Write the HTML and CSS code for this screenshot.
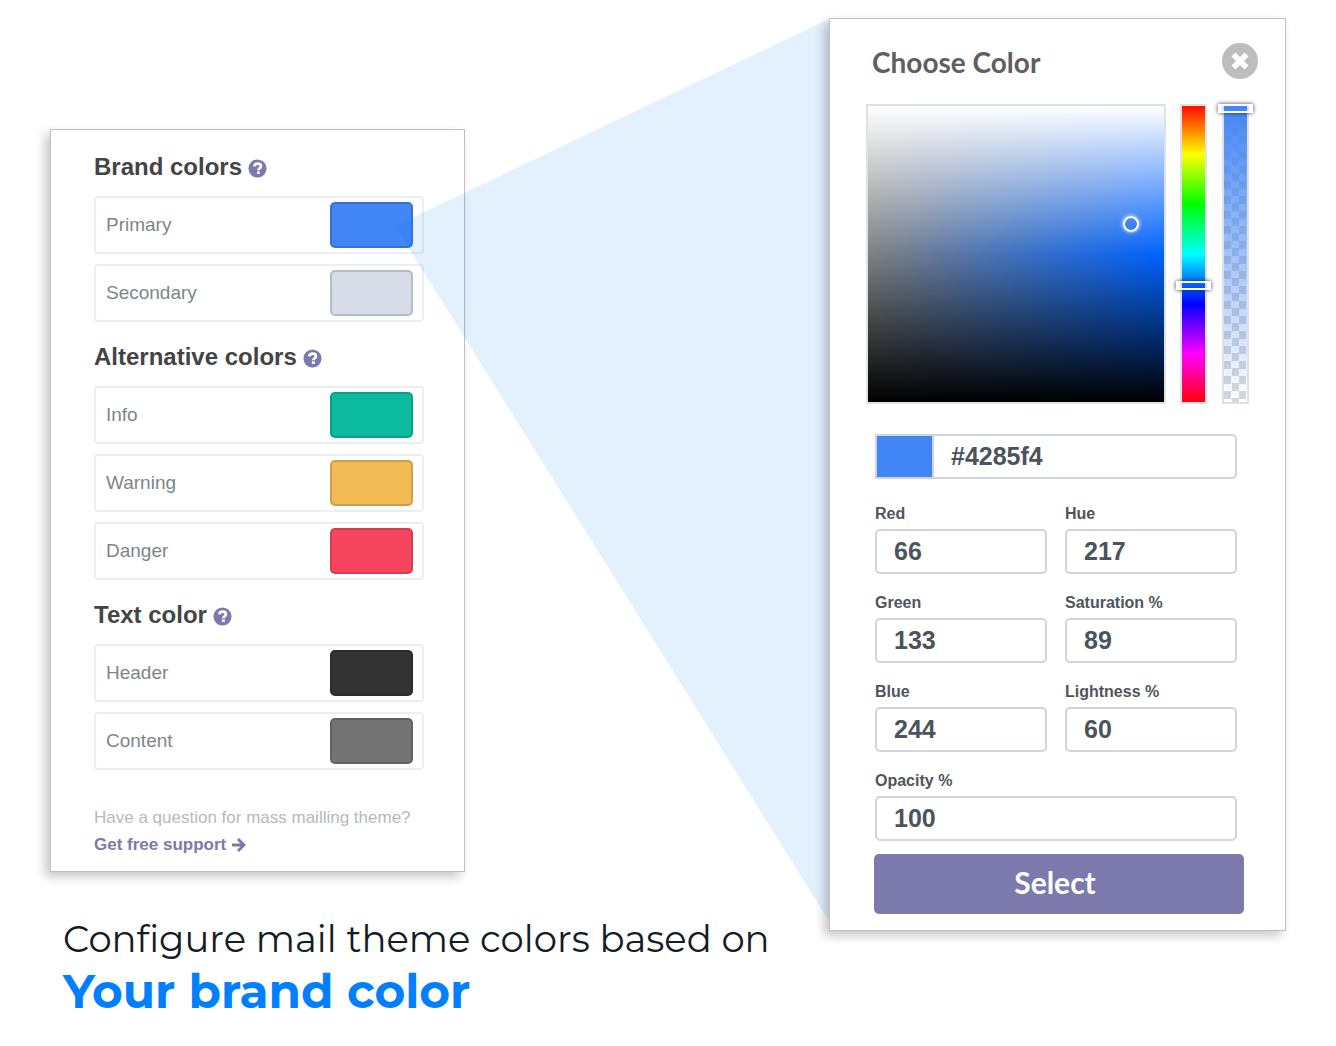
FILE: index.html
```html
<!DOCTYPE html>
<html lang="en">
<head>
  <meta charset="utf-8">
  <meta name="viewport" content="width=device-width, initial-scale=1">
  <title>Mail theme colors</title>
  <link rel="stylesheet" href="styles.css">
</head>
<body>
  <svg class="symbols" aria-hidden="true">
    <symbol id="help" viewBox="0 0 20 20">
      <circle cx="10" cy="10" r="9.5" fill="currentColor"/>
      <path d="M6.6 7.8C6.800 5.600 8.300 4.800 10.200 4.800c2 0 3.400 1.100 3.400 2.800 0 2.300-2.700 2.200-2.700 4.200" fill="none" stroke="#fff" stroke-width="2.800"/>
      <rect x="9.400" y="13" width="3" height="2.700" fill="#fff"/>
    </symbol>
  </svg>

  <main class="stage">
    <div class="intro">
      <section class="card theme">
        <section class="group">
          <h2 class="group-title">Brand colors
            <button class="help" type="button" aria-label="About brand colors"><svg><use href="#help"/></svg></button>
          </h2>
          <div class="row"><label for="primary">Primary</label><input class="swatch" id="primary" type="color" value="#4285f4"></div>
          <div class="row"><label for="secondary">Secondary</label><input class="swatch" id="secondary" type="color" value="#d6dce8"></div>
        </section>
        <section class="group">
          <h2 class="group-title">Alternative colors
            <button class="help" type="button" aria-label="About alternative colors"><svg><use href="#help"/></svg></button>
          </h2>
          <div class="row"><label for="info">Info</label><input class="swatch" id="info" type="color" value="#0cba9e"></div>
          <div class="row"><label for="warning">Warning</label><input class="swatch" id="warning" type="color" value="#f2ba55"></div>
          <div class="row"><label for="danger">Danger</label><input class="swatch" id="danger" type="color" value="#f6465f"></div>
        </section>
        <section class="group">
          <h2 class="group-title">Text color
            <button class="help" type="button" aria-label="About text color"><svg><use href="#help"/></svg></button>
          </h2>
          <div class="row"><label for="header">Header</label><input class="swatch" id="header" type="color" value="#333333"></div>
          <div class="row"><label for="content">Content</label><input class="swatch" id="content" type="color" value="#737373"></div>
        </section>
        <footer class="support">
          <p>Have a question for mass mailling theme?</p>
          <a href="#support">Get free support
            <svg class="arrow" viewBox="0 0 14 16" aria-hidden="true"><path d="M0 8h11M6 2l6 6-6 6" fill="none" stroke="currentColor" stroke-width="3"/></svg>
          </a>
        </footer>
      </section>

      <h1 class="headline">Configure mail theme colors based on <strong>Your brand color</strong></h1>
    </div>

    <svg class="beam" viewBox="0 0 434 902" preserveAspectRatio="none" aria-hidden="true">
      <path d="M0 207 434 0V902Z"/>
    </svg>

    <form class="card picker">
      <header class="picker-head">
        <h2>Choose Color</h2>
        <button class="close" type="button" aria-label="Close">
          <svg viewBox="0 0 36 36"><circle cx="18" cy="18" r="18" fill="#bdbdbd"/><path d="M11.500 11.500l13 13M24.500 11.500l-13 13" stroke="#fff" stroke-width="5.600"/></svg>
        </button>
      </header>

      <div class="spectrum">
        <div class="shade"><span class="point"></span></div>
        <div class="sliders">
          <input class="slider hue" type="range" min="0" max="360" value="219" aria-label="Hue slider">
          <input class="slider alpha" type="range" min="0" max="100" value="100" aria-label="Opacity slider">
        </div>
      </div>

      <div class="fields">
        <div class="hex">
          <span class="preview"></span>
          <input type="text" value="#4285f4" aria-label="Hex value">
        </div>
        <div class="field"><label for="red">Red</label><input id="red" type="text" value="66"></div>
        <div class="field"><label for="hue">Hue</label><input id="hue" type="text" value="217"></div>
        <div class="field"><label for="green">Green</label><input id="green" type="text" value="133"></div>
        <div class="field"><label for="saturation">Saturation %</label><input id="saturation" type="text" value="89"></div>
        <div class="field"><label for="blue">Blue</label><input id="blue" type="text" value="244"></div>
        <div class="field"><label for="lightness">Lightness %</label><input id="lightness" type="text" value="60"></div>
        <div class="field wide"><label for="opacity">Opacity %</label><input id="opacity" type="text" value="100"></div>
      </div>

      <button class="select" type="button">Select</button>
    </form>
  </main>
</body>
</html>
```

FILE: styles.css
```css
* {
  box-sizing: border-box;
}

body {
  margin: 0;
  background: #fff;
  font-family: "Liberation Sans", Arial, sans-serif;
}

h1, h2, p {
  margin: 0;
}

button {
  padding: 0;
  border: 0;
  background: none;
  cursor: pointer;
}

.symbols {
  display: none;
}

.stage {
  position: relative;
  display: grid;
  grid-template-columns: minmax(0, 1fr) 457px;
  align-items: start;
  padding: 18px 50px 24px;
}

.intro {
  padding-top: 111px;
}

.card {
  border: 1px solid #bfbfbf;
  background: #fff;
  box-shadow: -5px 5px 10px rgba(0, 0, 0, 0.22);
}

/* Theme colors */

.theme {
  display: flex;
  flex-direction: column;
  gap: 16px;
  max-width: 415px;
  padding: 18px 40px 13px 43px;
}

.group {
  display: flex;
  flex-direction: column;
  gap: 10px;
}

.group-title {
  display: flex;
  align-items: center;
  gap: 6px;
  height: 38px;
  color: #444;
  font-size: 24px;
  line-height: 36px;
}

.help {
  height: 19px;
  margin-top: 2px;
  color: #7c7aac;
}

.help svg {
  display: block;
  width: 19px;
  height: 19px;
}

.row {
  display: flex;
  align-items: center;
  justify-content: space-between;
  height: 58px;
  padding: 0 9px 0 10px;
  border: 2px solid #eceff2;
  border-radius: 4px;
  color: #7d858c;
  font-size: 19px;
}

.swatch {
  appearance: none;
  width: 83px;
  height: 46px;
  padding: 0;
  border: 0;
  background: none;
}

.swatch::-webkit-color-swatch-wrapper {
  padding: 0;
}

.swatch::-webkit-color-swatch {
  border: 2px solid rgba(0, 0, 0, 0.14);
  border-radius: 5px;
}

.support {
  padding-top: 18px;
  color: #b3bac1;
  font-size: 17px;
  line-height: 27px;
}

.support a {
  display: flex;
  align-items: center;
  gap: 6px;
  color: #7c7aac;
  font-weight: bold;
  text-decoration: none;
}

.arrow {
  width: 14px;
  height: 16px;
}

.headline {
  padding: 43px 0 0 13px;
  color: #141c26;
  font-family: Montserrat, Inter, sans-serif;
  font-size: 37px;
  font-weight: 400;
  font-variant-ligatures: none;
  line-height: 48px;
}

.headline strong {
  display: block;
  color: #0080ff;
  font-size: 47px;
  font-weight: 700;
  line-height: 58px;
}

/* Light cone that links the primary swatch with the picker */

.beam {
  position: absolute;
  top: 19px;
  left: 395px;
  width: calc(100% - 902px);
  height: 902px;
  fill: rgba(0, 123, 255, 0.11);
  pointer-events: none;
}

/* Color picker */

.picker {
  position: relative;
  padding: 24px 27px 16px 36px;
}

.picker-head {
  display: flex;
  align-items: center;
  justify-content: space-between;
  height: 36px;
  padding-left: 6px;
}

.picker-head h2 {
  padding-top: 2px;
  color: #605e5e;
  font-family: Lato, sans-serif;
  font-size: 28px;
  line-height: 36px;
}

.close svg {
  display: block;
  width: 36px;
  height: 36px;
}

.spectrum {
  display: flex;
  gap: 10px;
  margin-top: 25px;
  padding-right: 5px;
}

.shade {
  position: relative;
  flex: 1;
  aspect-ratio: 1;
  border: 2px solid #dde2e8;
  background:
    linear-gradient(to bottom, #fff, rgba(255, 255, 255, 0) 50%, rgba(0, 0, 0, 0) 50%, #000),
    linear-gradient(to right, #808080, #0062ff);
}

.point {
  position: absolute;
  top: 40%;
  left: 89%;
  width: 16px;
  height: 16px;
  margin: -8px;
  border: 2px solid #fff;
  border-radius: 50%;
  box-shadow: 0 0 4px #fff;
}

.sliders {
  display: flex;
  gap: 7px;
}

.slider {
  appearance: none;
  writing-mode: vertical-lr;
  width: 35px;
  height: 300px;
  margin: 0;
  padding: 0 4px;
  background: none;
}

.slider::-webkit-slider-runnable-track {
  width: 27px;
  height: 300px;
  box-shadow: inset 0 0 0 2px #dde2e8;
}

.slider::-webkit-slider-thumb {
  appearance: none;
  width: 35px;
  height: 9px;
  margin-left: -4px;
  border: solid #fff;
  border-width: 2px 4px;
  box-shadow: 0 0 4px rgba(33, 43, 54, 0.9);
}

.hue::-webkit-slider-runnable-track {
  background: linear-gradient(to bottom, #f00, #ff0, #0f0, #0ff, #00f, #f0f, #f00);
}

.alpha {
  direction: rtl;
}

.alpha::-webkit-slider-runnable-track {
  background:
    linear-gradient(to bottom, #4285f4, rgba(66, 133, 244, 0)),
    repeating-conic-gradient(#fff 0 25%, #d8d8d8 0 50%) 2px 2px / 15px 15px;
}

.fields {
  display: grid;
  grid-template-columns: 1fr 1fr;
  gap: 17px 18px;
  margin: 30px 21px 0 9px;
}

.hex,
.wide {
  grid-column: 1 / -1;
}

.hex {
  display: flex;
  height: 45px;
  margin-bottom: 6px;
}

.preview {
  width: 57px;
  border: 2px solid #d0d5dc;
  border-right: 0;
  background: #4285f4;
}

.field {
  display: flex;
  flex-direction: column;
  gap: 3px;
}

.field label {
  color: #50555a;
  font-size: 16px;
  font-weight: bold;
  line-height: 24px;
}

.fields input {
  width: 100%;
  height: 45px;
  padding: 0 17px;
  border: 2px solid #d0d5dc;
  border-radius: 5px;
  background: #fff;
  color: #4b535b;
  font: bold 25px "Liberation Sans", Arial, sans-serif;
}

.hex input {
  flex: 1;
  width: auto;
  min-width: 0;
  border-radius: 0 5px 5px 0;
}

.select {
  display: block;
  width: calc(100% - 22px);
  height: 60px;
  margin: 13px 0 0 8px;
  padding: 0 8px 5px 0;
  border-radius: 5px;
  background: #7c7aac;
  color: #fff;
  font: bold 30px Lato, sans-serif;
}

@media (max-width: 1240px) {
  .stage {
    grid-template-columns: minmax(0, 457px);
    gap: 40px;
    justify-content: center;
    padding: 18px 16px 24px;
  }

  .intro {
    padding-top: 0;
  }

  .beam {
    display: none;
  }
}
```
